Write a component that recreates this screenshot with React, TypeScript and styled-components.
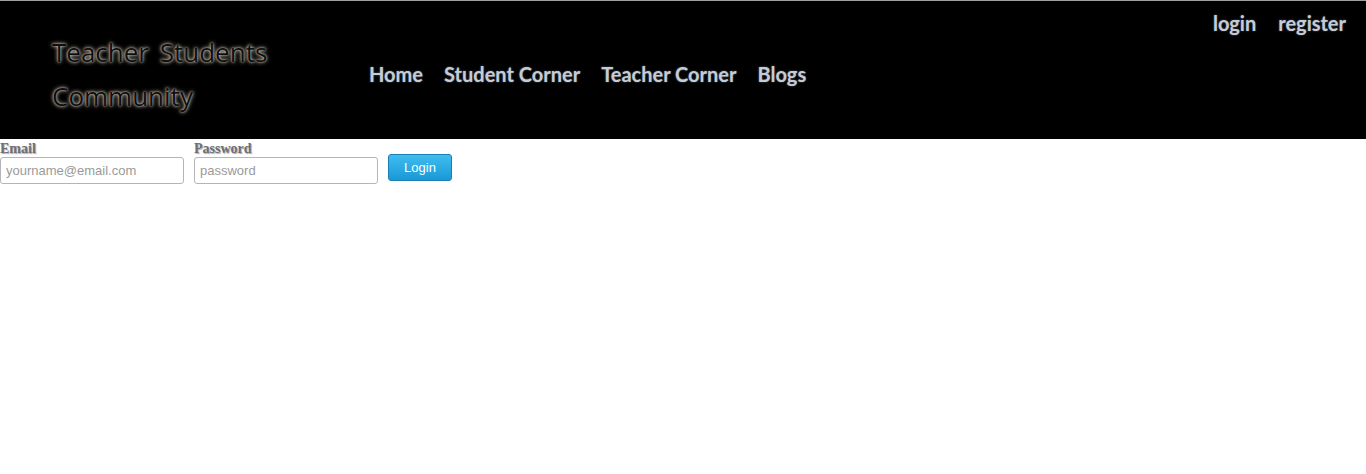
import React from "react";
import styled, { createGlobalStyle } from "styled-components";

const Global = createGlobalStyle`
  html, body { margin: 0; padding: 0; background: #fff; }
  body { font-family: "Liberation Sans", Arial, sans-serif; }
`;

const Header = styled.header`
  display: flex;
  align-items: stretch;
  height: 138px;
  background: #000;
  border-top: 1px solid #a0a0a0;
  position: relative;
`;

const Brand = styled.div`
  width: 265px;
  padding: 29px 0 0 52px;
  font-family: "Open Sans", "DejaVu Sans", sans-serif;
  font-size: 26px;
  line-height: 44px;
  word-spacing: 4px;
  color: #0d0d14;
  text-shadow: 0 0 4px #f0e8d0, 0 0 2px #cfc5aa;
`;

const Nav = styled.nav`
  display: flex;
  align-items: center;
  gap: 21px;
  padding: 0 0 0 52px;
  margin-top: 8px;
`;

const NavLink = styled.a`
  font-family: "Comic Sans MS", "Lato", sans-serif;
  font-weight: 700;
  font-size: 20px;
  color: #c5ccd6;
  text-decoration: none;
  text-shadow: 0 0 2px #5a6270;
`;

const Account = styled.div`
  position: absolute;
  top: 10px;
  right: 20px;
  display: flex;
  gap: 22px;
`;

const Form = styled.form`
  display: flex;
  align-items: flex-end;
  gap: 10px;
  padding-top: 2px;
`;

const Field = styled.label`
  display: flex;
  flex-direction: column;
`;

const LabelText = styled.span`
  font-family: "Liberation Serif", serif;
  font-weight: 700;
  font-size: 14px;
  line-height: 16px;
  color: #6c7078;
  text-shadow: 1px 1px 1px #aaa;
`;

const Input = styled.input`
  box-sizing: border-box;
  width: 184px;
  height: 27px;
  border: 1px solid #b5b5b5;
  border-radius: 3px;
  padding: 0 5px;
  font-family: "Liberation Sans", Arial, sans-serif;
  font-size: 13px;
  color: #333;
  &::placeholder { color: #9a9a9a; }
`;

const Button = styled.button`
  box-sizing: border-box;
  width: 64px;
  height: 27px;
  margin-bottom: 3px;
  border: 1px solid #1a7fb5;
  border-radius: 3px;
  background: linear-gradient(#3fbdf0, #1a98d6);
  color: #fff;
  font-family: "Liberation Sans", Arial, sans-serif;
  font-size: 13px;
  cursor: pointer;
`;

export default function App() {
  return (
    <>
      <Global />
      <Header>
        <Brand>
          Teacher Students
          <br />
          Community
        </Brand>
        <Nav>
          <NavLink href="#">Home</NavLink>
          <NavLink href="#">Student Corner</NavLink>
          <NavLink href="#">Teacher Corner</NavLink>
          <NavLink href="#">Blogs</NavLink>
        </Nav>
        <Account>
          <NavLink href="#">login</NavLink>
          <NavLink href="#">register</NavLink>
        </Account>
      </Header>
      <Form onSubmit={(e) => e.preventDefault()}>
        <Field>
          <LabelText>Email</LabelText>
          <Input type="text" placeholder="yourname@email.com" />
        </Field>
        <Field>
          <LabelText>Password</LabelText>
          <Input type="password" placeholder="password" />
        </Field>
        <Button type="submit">Login</Button>
      </Form>
    </>
  );
}
